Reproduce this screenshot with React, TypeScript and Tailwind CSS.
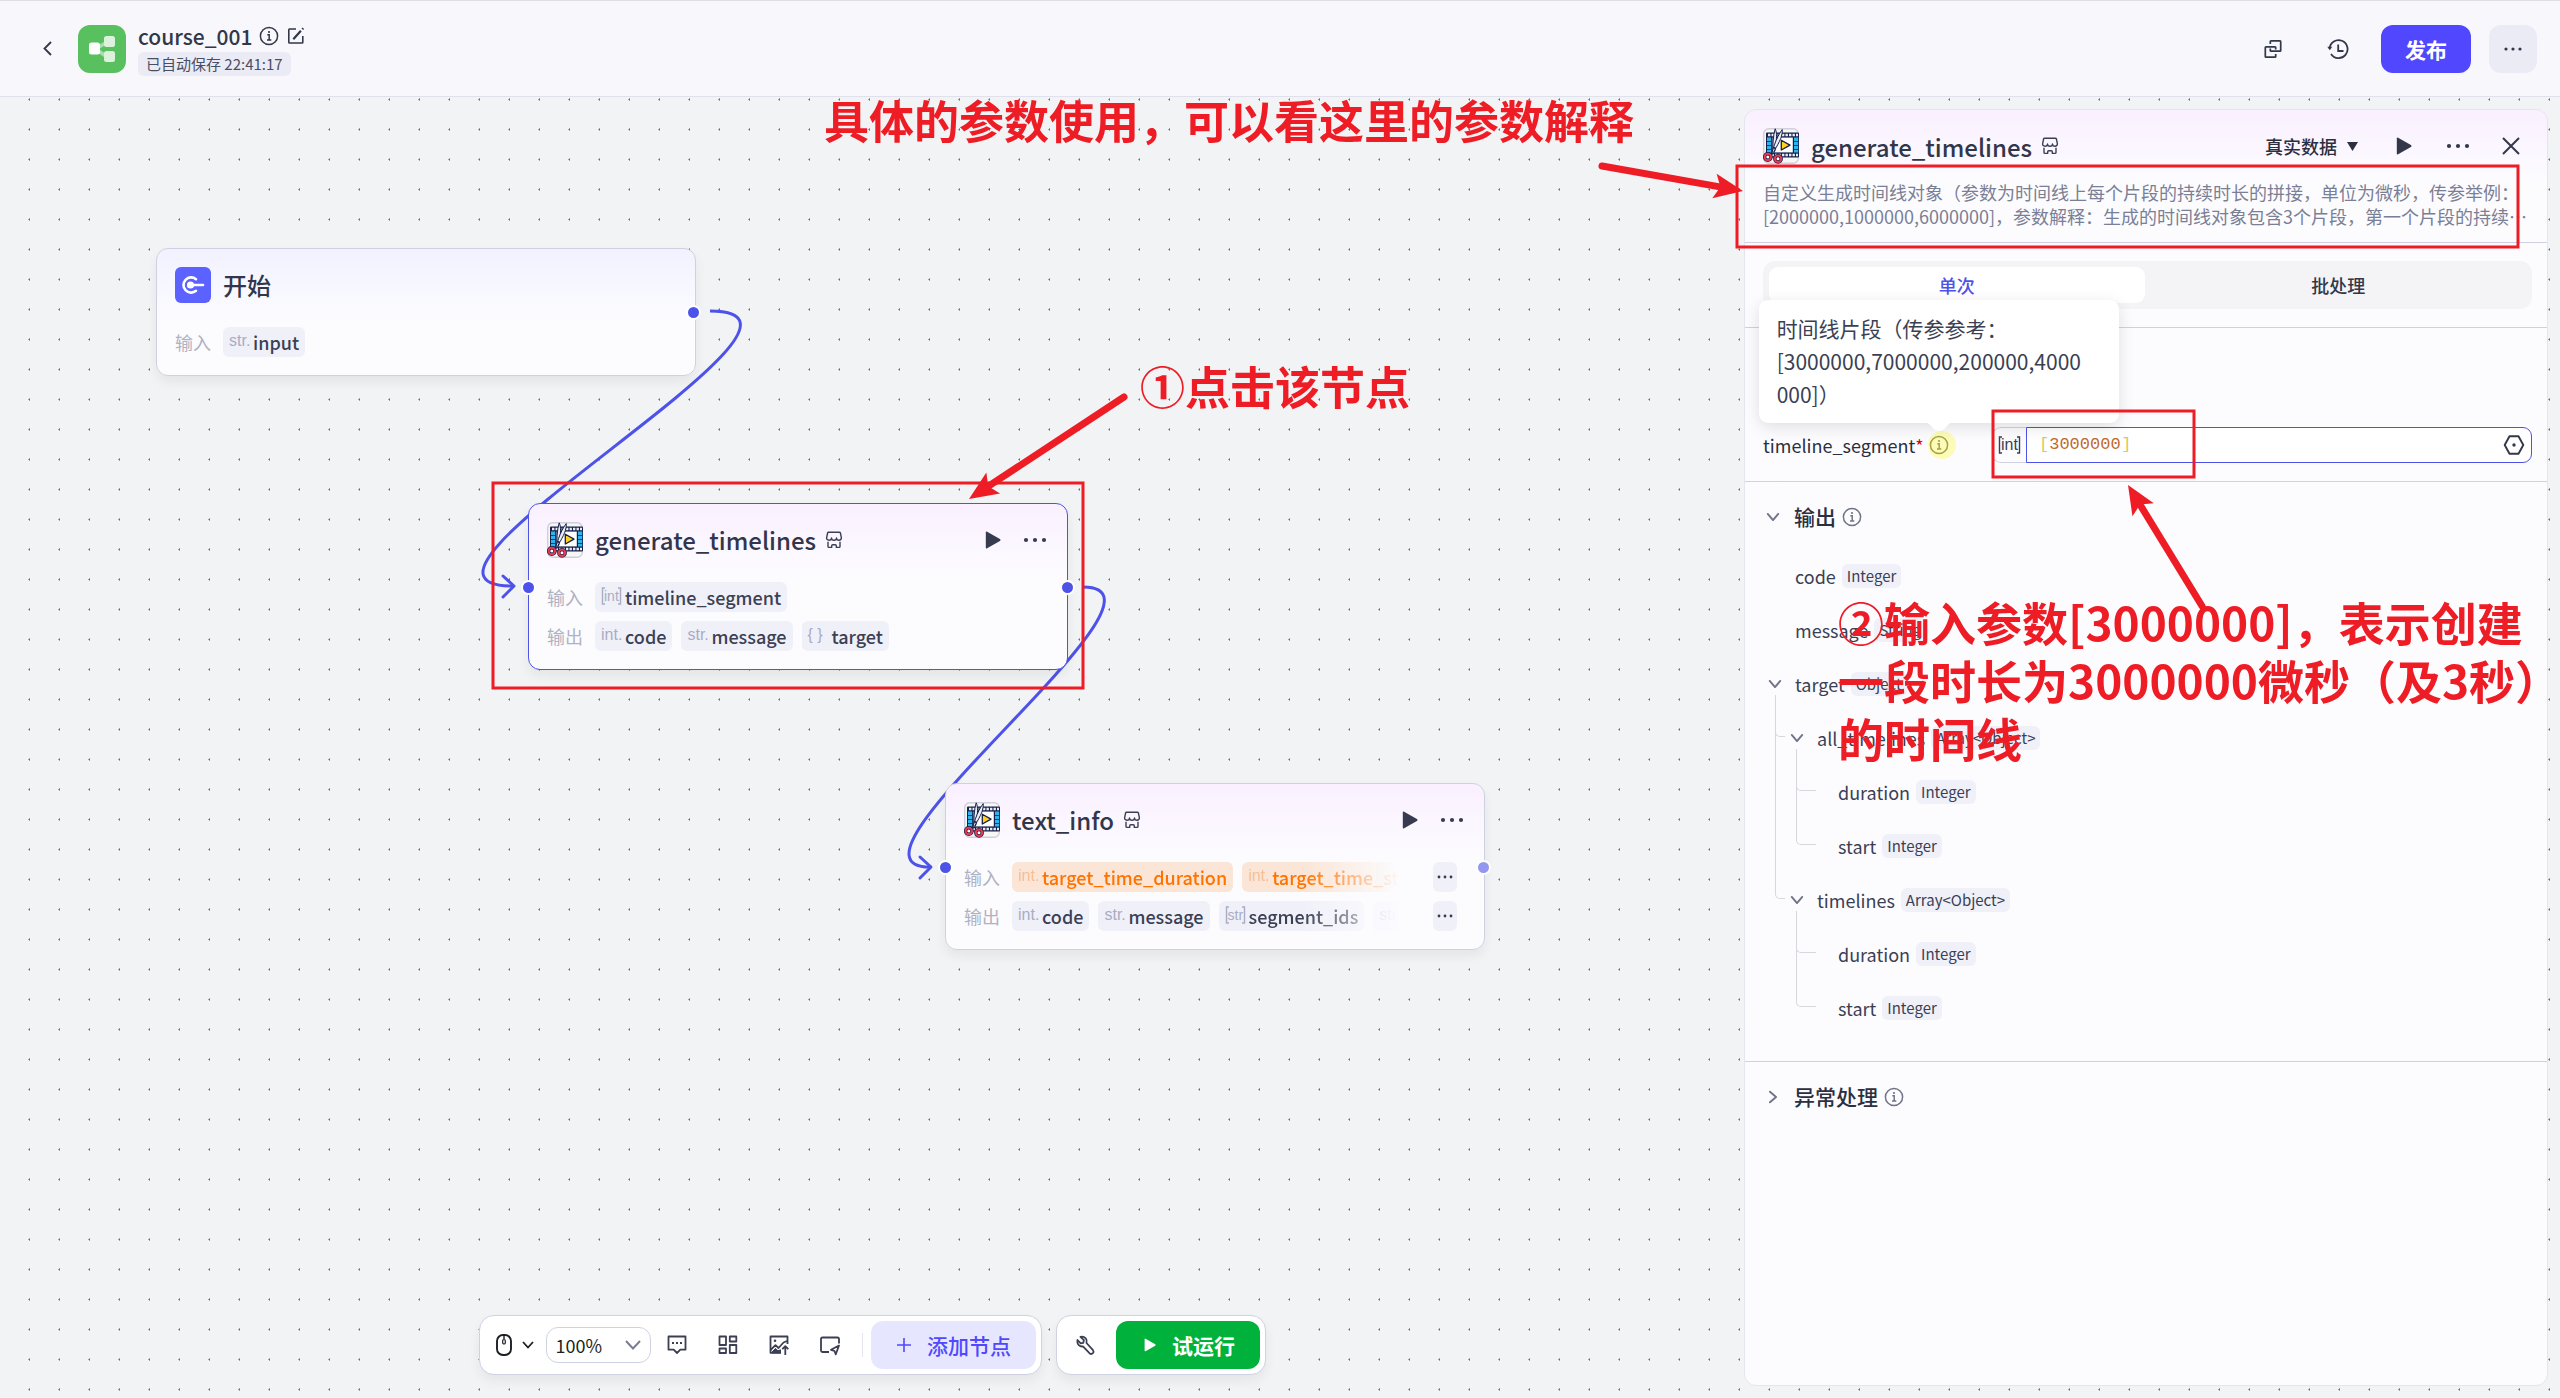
import type { ReactNode } from "react";

const SANS = "font-['Noto_Sans_CJK_SC','Noto_Sans',sans-serif]";

type Kind = "int" | "str" | "obj" | "int[]" | "str[]";

function TypeTag({ kind, large }: { kind: Kind; large?: boolean }) {
  if (kind === "obj") {
    return <span className="font-['Liberation_Sans',sans-serif] text-base leading-5">{"{ }"}</span>;
  }
  if (kind === "int[]" || kind === "str[]") {
    return (
      <span
        className={
          large
            ? "flex h-5 items-center font-['Liberation_Sans',sans-serif] text-base leading-5"
            : "flex h-5 items-center font-['Liberation_Sans',sans-serif] text-sm leading-5"
        }
      >
        <svg width="4" height="18" viewBox="0 0 4 18" fill="none" stroke="currentColor" strokeWidth="1.4">
          <path d="M4 1H1.5v16H4" />
        </svg>
        <span className="-mx-px">{kind === "int[]" ? "int" : "str"}</span>
        <svg width="4" height="18" viewBox="0 0 4 18" fill="none" stroke="currentColor" strokeWidth="1.4">
          <path d="M0 1h2.5v16H0" />
        </svg>
      </span>
    );
  }
  return <span className="font-['Liberation_Sans',sans-serif] text-base leading-5">{kind}.</span>;
}

function Chip({ kind, children, warn }: { kind: Kind; children: ReactNode; warn?: boolean }) {
  return (
    <span
      className={
        warn
          ? "flex h-[30px] shrink-0 items-center rounded-md bg-[#fae5d6] px-1.5 text-lg leading-[30px] font-medium text-[#ff7300]"
          : "flex h-[30px] shrink-0 items-center rounded-md bg-[#f0f0f9] px-1.5 text-lg leading-[30px] font-medium text-[#3b4054]"
      }
    >
      <span className={warn ? "flex w-6 pb-0.5 font-normal text-[#f6bf95]" : "flex w-6 pb-0.5 font-normal text-[#a9acc4]"}>
        <TypeTag kind={kind} />
      </span>
      {children}
    </span>
  );
}

function InfoIcon({ className }: { className?: string }) {
  return (
    <svg className={className} width="20" height="20" viewBox="0 0 20 20" fill="none" stroke="currentColor" strokeWidth="1.5" aria-hidden="true">
      <circle cx="10" cy="10" r="8.6" />
      <circle cx="10" cy="6" r="1.1" fill="currentColor" stroke="none" />
      <path d="M8.3 8.8h1.9v5M8 14h4.3" />
    </svg>
  );
}

function StoreIcon() {
  return (
    <svg className="text-[#3b3f54]" width="18" height="18" viewBox="0 0 18 18" fill="none" stroke="currentColor" strokeWidth="1.4" strokeLinejoin="round" aria-hidden="true">
      <path d="M3.6 1.200h10.8q.8 0 1 .8l1 4.800q0 2.400-2.400 2.400T11.500 7Q11.500 9.200 9 9.200T6.500 7Q6.500 9.200 4 9.200T1.600 6.800l1-4.800q.2-.8 1-.8Z" />
      <path d="M3 10.800v4.600q0 1 1 1h2.700v-1.700q0-1 1-1h2.600q1 0 1 1v1.700H14q1 0 1-1v-4.600" />
    </svg>
  );
}

function PlayIcon({ className }: { className?: string }) {
  return (
    <svg className={className} width="16" height="18" viewBox="0 0 16 18" fill="currentColor" aria-hidden="true">
      <path d="M.8 1.600Q.8.2 2.100.8l12.800 7.300q1.200.9 0 1.800L2.100 17.200Q.8 17.800.8 16.400Z" />
    </svg>
  );
}

function DotsIcon({ small }: { small?: boolean }) {
  return (
    <svg width={small ? 16 : 24} height={small ? 4 : 6} viewBox="0 0 24 6" fill="currentColor" aria-hidden="true">
      <circle cx="3" cy="3" r="2.100" />
      <circle cx="12" cy="3" r="2.100" />
      <circle cx="21" cy="3" r="2.100" />
    </svg>
  );
}

function ChevronDown({ className, size = 16 }: { className?: string; size?: number }) {
  return (
    <svg className={className} width={size} height={size} viewBox="0 0 16 16" fill="none" stroke="currentColor" strokeWidth="2.200" strokeLinecap="round" strokeLinejoin="round" aria-hidden="true">
      <path d="M2 4.500l6 7 6-7" />
    </svg>
  );
}

function CutterIcon() {
  return (
    <svg width="36" height="36" viewBox="0 0 36 36" aria-hidden="true">
      <rect x=".7" y=".7" width="34.600" height="34.600" rx="5" fill="#f7f7f6" stroke="#cfd0dc" strokeWidth="1.400" />
      <rect x="3" y="4.500" width="33" height="25" rx="1" fill="#16204a" />
      <rect x="4" y="9.500" width="4.200" height="15" fill="#2bb4ee" />
      <rect x="31" y="9.500" width="4.200" height="15" fill="#2bb4ee" />
      <path d="M4 13.500h4.500M4 17.500h4.500M4 21.500h4.500M31 13.500h4.500M31 17.500h4.500M31 21.500h4.500" stroke="#16204a" strokeWidth=".8" />
      <path d="M5 7h30M5 27h30" stroke="#e9edf8" strokeWidth="2.400" strokeDasharray="2.400 1.100" />
      <rect x="9.600" y="9.600" width="20.200" height="14.800" fill="#fdfdfd" />
      <path d="M18.300 12.200v9.800l8.700-4.900Z" fill="#ffd21c" stroke="#16204a" strokeWidth="1.300" strokeLinejoin="round" />
      <path d="M12.200.8c1.900 4.200 1.700 9-.2 22l-2.300 3.700c0-8 .3-19 2.500-25.700Z" fill="#eceff6" stroke="#16204a" strokeWidth="1" />
      <path d="M19.200 1.600c.5 6-2 11-8.200 21.800l-2.600 3 3-9.500c2.200-6 4.500-11 7.800-15.300Z" fill="#eceff6" stroke="#16204a" strokeWidth="1" />
      <circle cx="11.800" cy="20" r="1" fill="#16204a" />
      <circle cx="4.800" cy="29" r="3.200" fill="#fff" stroke="#1d1f45" strokeWidth="3.400" />
      <circle cx="4.800" cy="29" r="3.200" fill="none" stroke="#ea3a52" strokeWidth="2" />
      <circle cx="15" cy="30.800" r="3.200" fill="#fff" stroke="#1d1f45" strokeWidth="3.400" />
      <circle cx="15" cy="30.800" r="3.200" fill="none" stroke="#ea3a52" strokeWidth="2" />
    </svg>
  );
}

function Port({ className }: { className: string }) {
  return <span className={`absolute size-[15px] rounded-full border-2 border-white ${className}`} />;
}

function NodeRow({ label, children }: { label: string; children: ReactNode }) {
  return (
    <div className="flex h-[30px] items-center gap-3">
      <span className="w-9 shrink-0 text-lg leading-[30px] text-[#b0b2c3]">{label}</span>
      {children}
    </div>
  );
}

function NodeActions() {
  return (
    <div className="ml-auto flex items-center gap-[22px] text-[#363b4f]">
      <button aria-label="运行" className="flex">
        <PlayIcon />
      </button>
      <button aria-label="更多" className="mr-0.5 flex">
        <DotsIcon />
      </button>
    </div>
  );
}

function Wires() {
  return (
    <svg className="pointer-events-none absolute inset-0 h-full w-full overflow-visible" fill="none" stroke="#4d53e8" strokeWidth="3" aria-hidden="true">
      <path d="M710 214C867 214 357 489 513 489" />
      <path d="M503 479l11 10-11 11" strokeLinecap="round" strokeLinejoin="round" />
      <path d="M1083 490C1196 490 818 770 930 770" />
      <path d="M920 760l11 10-11 11" strokeLinecap="round" strokeLinejoin="round" />
    </svg>
  );
}

const nodeBox =
  "absolute flex w-[540px] flex-col gap-[9px] rounded-xl border p-[18px] shadow-[0_6px_12px_rgba(0,0,0,0.06)]";

function Canvas() {
  return (
    <div className="absolute inset-0">
      <Wires />
      <section className={`${nodeBox} top-[151px] left-[156px] border-[#cfd1e2] bg-linear-to-b from-[#f2f2ff] to-[#fcfcff] to-60%`}>
        <div className="mb-[15px] flex h-9 items-center gap-3">
          <span className="flex size-9 items-center justify-center rounded-md bg-[#5c62ff]">
            <svg width="24" height="20" viewBox="0 0 24 20" fill="none" stroke="#fff" strokeWidth="2.600" strokeLinecap="round" aria-hidden="true">
              <path d="M15 4.200A7.600 7.600 0 1 0 15 15.800" />
              <circle cx="9.500" cy="10" r="3.600" fill="#fff" stroke="none" />
              <path d="M11 10h11" />
            </svg>
          </span>
          <h2 className="text-2xl leading-9 font-medium text-[#32364a]">开始</h2>
        </div>
        <NodeRow label="输入">
          <Chip kind="str">input</Chip>
        </NodeRow>
        <Port className="top-[56px] -right-[6px] bg-[#4d53e8]" />
      </section>

      <section className={`${nodeBox} top-[406px] left-[528px] border-[#4d53e8] bg-linear-to-b from-[#faf0ff] to-[#fcfcff] to-45%`}>
        <div className="mb-[15px] flex h-9 items-center">
          <CutterIcon />
          <h2 className="mr-[9px] ml-3 text-2xl leading-9 font-medium text-[#32364a]">generate_timelines</h2>
          <StoreIcon />
          <NodeActions />
        </div>
        <NodeRow label="输入">
          <Chip kind="int[]">timeline_segment</Chip>
        </NodeRow>
        <NodeRow label="输出">
          <div className="flex gap-[9px]">
            <Chip kind="int">code</Chip>
            <Chip kind="str">message</Chip>
            <Chip kind="obj">target</Chip>
          </div>
        </NodeRow>
        <Port className="top-[76px] -left-[8px] bg-[#4d53e8]" />
        <Port className="top-[76px] -right-[8px] bg-[#4d53e8]" />
      </section>

      <section className={`${nodeBox} top-[686px] left-[945px] border-[#cfd1e2] bg-linear-to-b from-[#faf0ff] to-[#fcfcff] to-45%`}>
        <div className="mb-[15px] flex h-9 items-center">
          <CutterIcon />
          <h2 className="mr-[9px] ml-3 text-2xl leading-9 font-medium text-[#32364a]">text_info</h2>
          <StoreIcon />
          <NodeActions />
        </div>
        <NodeRow label="输入">
          <div className="flex w-[388px] gap-[9px] overflow-hidden mask-r-from-75%">
            <Chip kind="int" warn>target_time_duration</Chip>
            <Chip kind="int" warn>target_time_start</Chip>
          </div>
          <MoreChip />
        </NodeRow>
        <NodeRow label="输出">
          <div className="flex w-[388px] gap-[9px] overflow-hidden mask-r-from-75%">
            <Chip kind="int">code</Chip>
            <Chip kind="str">message</Chip>
            <Chip kind="str[]">segment_ids</Chip>
            <Chip kind="str">
              <span className="w-6" />
            </Chip>
          </div>
          <MoreChip />
        </NodeRow>
        <Port className="top-[76px] -left-[8px] bg-[#4d53e8]" />
        <Port className="top-[76px] -right-[7px] bg-[#9297f2]" />
      </section>
    </div>
  );
}

function MoreChip() {
  return (
    <button aria-label="查看全部" className="mr-[9px] ml-auto flex h-[30px] w-6 shrink-0 items-center justify-center rounded-md bg-[#f0f0f9] text-[#363b4f]">
      <DotsIcon small />
    </button>
  );
}

function Header() {
  return (
    <header className="flex h-[97px] shrink-0 items-center border-t border-b border-t-[#dfdfe2] border-b-[#e0e1ec] bg-[#f7f7fc] pr-[23px] pl-[35px]">
      <button aria-label="返回" className="flex size-6 items-center justify-center text-[#32374a]">
        <svg width="9" height="15" viewBox="0 0 9 15" fill="none" stroke="currentColor" strokeWidth="1.800" aria-hidden="true">
          <path d="M8 1L1.500 7.500 8 14" />
        </svg>
      </button>
      <span className="ml-[19px] flex size-12 items-center justify-center rounded-xl bg-[#59c060]">
        <svg width="26" height="26" viewBox="0 0 26 26" aria-hidden="true">
          <path d="M7 13l11-7M7 13l11 8" stroke="#a9dfac" strokeWidth="3.500" />
          <rect x="15" y="0" width="11" height="11" rx="2.500" fill="#dcf2dd" />
          <rect x="15" y="15" width="11" height="11" rx="2.500" fill="#dcf2dd" />
          <rect x="0" y="6.500" width="11" height="12" rx="2.500" fill="#fff" />
        </svg>
      </span>
      <div className="ml-3 flex flex-col items-start">
        <div className="flex h-7 items-center gap-2 text-[#32374a]">
          <h1 className="text-[21px] leading-7 font-medium">course_001</h1>
          <InfoIcon className="-ml-px" />
          <button aria-label="编辑" className="flex">
            <svg width="18" height="18" viewBox="0 0 18 18" fill="none" stroke="currentColor" strokeWidth="1.600" strokeLinejoin="round" aria-hidden="true">
              <path d="M9 2H2.500q-.7 0-.7.7v12.600q0 .7.700.7h12.600q.7 0 .7-.7V9" />
              <path d="M6.300 12.200l7.600-8.400M15.300 2.300l1-1.100" strokeWidth="2.200" />
            </svg>
          </button>
        </div>
        <span className="mt-0.5 h-6 rounded-md bg-[#ebebf5] px-2 text-[15px] leading-6 text-[#4a4e63]">已自动保存 22:41:17</span>
      </div>
      <div className="ml-auto flex items-center text-[#32374a]">
        <button aria-label="复制" className="flex">
          <svg width="20" height="20" viewBox="0 0 20 20" fill="none" stroke="currentColor" strokeWidth="1.700" strokeLinejoin="round" aria-hidden="true">
            <path d="M7.300 5V2.500q0-.7.7-.7h9q.7 0 .7.700v9q0 .7-.7.7H8q-.7 0-.7-.7V9.600" />
            <path d="M12.700 15v2.500q0 .7-.7.700H3q-.7 0-.7-.7v-9q0-.7.700-.7h9q.7 0 .7.700v2" />
          </svg>
        </button>
        <button aria-label="历史版本" className="ml-[44px] flex">
          <svg width="22" height="22" viewBox="0 0 22 22" fill="none" stroke="currentColor" strokeWidth="1.800" aria-hidden="true">
            <path d="M2.600 10.500A9 9 0 1 1 4 16" />
            <path d="M.3 8.700h5l-2.500 3.600Z" fill="currentColor" stroke="none" />
            <path d="M11.200 6.500V13h5.300" />
          </svg>
        </button>
        <button className="ml-8 h-12 w-[90px] rounded-xl bg-[#5147ff] text-[21px] leading-6 font-bold text-white">发布</button>
        <button aria-label="更多" className="ml-[18px] flex size-12 items-center justify-center rounded-xl bg-[#ebebf5]">
          <svg width="18" height="4" viewBox="0 0 18 4" fill="currentColor" aria-hidden="true">
            <circle cx="2" cy="2" r="1.600" />
            <circle cx="9" cy="2" r="1.600" />
            <circle cx="16" cy="2" r="1.600" />
          </svg>
        </button>
      </div>
    </header>
  );
}

function IconButton({ label, children }: { label: string; children: ReactNode }) {
  return (
    <button aria-label={label} className="flex size-6 items-center justify-center">
      <svg width="22" height="22" viewBox="0 0 22 22" fill="none" stroke="currentColor" strokeWidth="1.800" strokeLinejoin="round" aria-hidden="true">
        {children}
      </svg>
    </button>
  );
}

function Toolbar() {
  return (
    <div className="relative mb-[11px] flex gap-[14px]">
      <div className="flex h-[60px] items-center rounded-[15px] border border-[#d0d2e2] bg-white pr-[5px] pl-4 text-[#3b3f54] shadow-[0_6px_12px_rgba(0,0,0,0.06)]">
        <button aria-label="鼠标模式" className="flex items-center gap-2.5 text-[#1c1f23]">
          <svg width="16" height="22" viewBox="0 0 16 22" fill="none" stroke="currentColor" strokeWidth="1.900" aria-hidden="true">
            <rect x="1" y="1" width="14" height="20" rx="6" />
            <rect x="6.700" y="5.500" width="2.600" height="4.500" rx="1.300" strokeWidth="1.200" />
            <path d="M8 1v4" strokeWidth="1.400" />
          </svg>
          <svg width="12" height="8" viewBox="0 0 12 8" fill="none" stroke="currentColor" strokeWidth="1.800" aria-hidden="true">
            <path d="M1 1l5 5.500L11 1" />
          </svg>
        </button>
        <div className="relative ml-3 flex items-center">
          <select aria-label="缩放" defaultValue="100" className="h-9 w-[105px] appearance-none rounded-xl border border-[#d0d2e2] bg-white pl-[9px] text-lg leading-8 text-[#1c1f23]">
            <option value="100">100%</option>
            <option value="50">50%</option>
          </select>
          <svg className="pointer-events-none absolute right-2.5" width="16" height="10" viewBox="0 0 16 10" fill="none" stroke="#777b94" strokeWidth="1.900" aria-hidden="true">
            <path d="M1 1l7 7.500L15 1" />
          </svg>
        </div>
        <div className="ml-[14px] flex gap-[27px]">
          <IconButton label="评论">
            <path d="M2.500 2.500h17v13.200h-5.200L11 19l-3.300-3.300H2.500Z" />
            <path d="M6 9h2M10 9h2M14 9h2" strokeWidth="2" />
          </IconButton>
          <IconButton label="布局">
            <rect x="2.500" y="2.500" width="6.500" height="8.500" />
            <rect x="12.800" y="2.500" width="6.500" height="5" />
            <rect x="2.500" y="14.500" width="6.500" height="4.500" />
            <rect x="12.800" y="11" width="6.500" height="8" />
          </IconButton>
          <IconButton label="导出图片">
            <path d="M19.500 10V2.500h-17v16.300H13M17.300 21v-8.500M14.300 15.200l3-3 3 3" />
            <path d="M2.500 16l5-4.800 3 2.800 5-5.500 3.500-1.500" />
            <path d="M4 18l3.500-3.500 2.500 2.300 2.500-1v3H4Z" fill="currentColor" strokeWidth="1" />
            <circle cx="7" cy="6.800" r="1.300" fill="currentColor" stroke="none" />
          </IconButton>
          <IconButton label="小地图">
            <path d="M20 9.500V5q0-1.500-1.500-1.500h-15Q2 3.500 2 5v11.500Q2 18 3.500 18H10" />
            <path d="M20 11.500l-8 4.300 3.500 1.200 1.300 3.300Z" />
          </IconButton>
        </div>
        <span className="mr-2 ml-5 h-6 w-px bg-[#e4e5ee]" />
        <button className="flex h-12 w-[165px] items-center justify-center gap-4 rounded-xl bg-[#e6e7ff] pl-0.5 text-[21px] leading-6 font-medium text-[#5147ff]">
          <svg width="14" height="14" viewBox="0 0 14 14" stroke="currentColor" strokeWidth="1.600" aria-hidden="true">
            <path d="M7 0v14M0 7h14" />
          </svg>
          添加节点
        </button>
      </div>
      <div className="flex h-[60px] items-center rounded-[15px] border border-[#d0d2e2] bg-white pr-[5px] pl-[17px] text-[#3b3f54] shadow-[0_6px_12px_rgba(0,0,0,0.06)]">
        <IconButton label="调试">
          <path d="M5.500 2.800l3.400 3.400-.6 2.600-2.600.6L2.500 6q-.6 3.400 1.300 5.200 1.800 1.700 4.200 1.200l6.700 7q1.700 1.200 3.200-.2 1.300-1.500.1-3L11.500 9q.8-2.600-.8-4.700-2-2.200-5.200-1.500Z" />
        </IconButton>
        <button className="ml-[18px] flex h-12 w-36 items-center justify-center gap-4 rounded-xl bg-[#00b23c] pl-1 text-[21px] leading-6 font-bold text-white">
          <PlayIcon className="h-[14px] w-3" />
          试运行
        </button>
      </div>
    </div>
  );
}

type Field = { name: string; type: string; children?: Field[] };

const outputs: Field[] = [
  { name: "code", type: "Integer" },
  { name: "message", type: "String" },
  {
    name: "target",
    type: "Object",
    children: [
      {
        name: "all_timelines",
        type: "Array<Object>",
        children: [
          { name: "duration", type: "Integer" },
          { name: "start", type: "Integer" },
        ],
      },
      {
        name: "timelines",
        type: "Array<Object>",
        children: [
          { name: "duration", type: "Integer" },
          { name: "start", type: "Integer" },
        ],
      },
    ],
  },
];

function FieldTree({ fields, depth = 0 }: { fields: Field[]; depth?: number }) {
  return (
    <ul className={depth === 0 ? "" : depth === 1 ? "ml-3" : "ml-[21px]"}>
      {fields.map((field, i) => (
        <li key={field.name} className="relative">
          {depth > 0 && (
            <span
              className={
                depth === 1
                  ? "absolute -top-4 left-0 h-[42px] w-2.5 rounded-bl-[5px] border-b border-l border-[#d7d8df]"
                  : "absolute -top-4 left-0 h-[42px] w-5 rounded-bl-[5px] border-b border-l border-[#d7d8df]"
              }
            />
          )}
          {depth > 0 && i < fields.length - 1 && <span className="absolute inset-y-0 left-0 w-px bg-[#d7d8df]" />}
          <div className={depth === 0 ? "flex h-[54px] items-center pl-[5px]" : "flex h-[54px] items-center pl-[15px]"}>
            <span className="mr-[13px] flex w-[14px] justify-center text-[#70748a]">
              {field.children && <ChevronDown size={14} />}
            </span>
            <span className="text-lg leading-6 text-[#3b3f54]">{field.name}</span>
            <span className="ml-1.5 h-6 rounded-md bg-[#f0f0f9] px-[5px] text-[15px] leading-6 text-[#3b3f54]">{field.type}</span>
          </div>
          {field.children && <FieldTree fields={field.children} depth={depth + 1} />}
        </li>
      ))}
    </ul>
  );
}

function Panel() {
  return (
    <aside className="relative flex w-[804px] shrink-0 flex-col rounded-xl border border-[#e4e6ef] bg-[#fcfcff] bg-linear-to-b from-[#faf0ff] to-[#fcfcff] to-[72px] text-[#2b2f3f]">
      <div className="border-b border-[#cfd1e2] pt-[18px] pr-[15px] pb-[14px] pl-[18px]">
        <div className="flex h-9 items-center">
          <CutterIcon />
          <h2 className="mr-[9px] ml-3 pt-0.5 text-2xl leading-9 font-medium text-[#32364a]">generate_timelines</h2>
          <StoreIcon />
          <button className="ml-auto flex items-center gap-2.5 text-lg leading-6 font-medium">
            真实数据
            <svg width="11" height="9" viewBox="0 0 11 9" fill="currentColor" aria-hidden="true">
              <path d="M0 0h11L5.500 9Z" />
            </svg>
          </button>
          <div className="ml-[38px] flex items-center text-[#32374a]">
            <button aria-label="运行" className="flex">
              <PlayIcon />
            </button>
            <button aria-label="更多" className="ml-[34px] flex">
              <DotsIcon />
            </button>
            <button aria-label="关闭" className="mr-3 ml-8 flex">
              <svg width="18" height="18" viewBox="0 0 18 18" stroke="currentColor" strokeWidth="2" aria-hidden="true">
                <path d="M1 1l16 16M17 1L1 17" />
              </svg>
            </button>
          </div>
        </div>
        <p className="mt-4 h-12 text-lg leading-6 whitespace-nowrap text-[#7b7f95]" lang="zh-CN">
          自定义生成时间线对象（参数为时间线上每个片段的持续时长的拼接，单位为微秒，传参举例：
          <br />
          [2000000,1000000,6000000]，参数解释：生成的时间线对象包含3个片段，第一个片段的持续…
        </p>
      </div>

      <div className="border-b border-[#cfd1e2] py-[18px] pr-[15px] pl-[18px]">
        <div role="tablist" className="flex h-12 gap-1.5 rounded-xl bg-[#f4f4f7] p-1.5 text-lg leading-6 font-medium">
          <button role="tab" aria-selected="true" className="flex-1 rounded-[9px] bg-white text-[#4d53e8]">单次</button>
          <button role="tab" aria-selected="false" className="flex-1 rounded-[9px] text-[#32374a]">批处理</button>
        </div>
      </div>

      <div className="flex items-center border-b border-[#cfd1e2] pt-[99px] pr-[15px] pb-[18px] pl-[18px]">
        <label htmlFor="timeline" className="text-lg leading-6">timeline_segment</label>
        <span className="text-lg leading-6 text-red-600">*</span>
        <span className="relative ml-[5px] flex text-[#a3a346]">
          <span className="absolute -top-1 -left-px size-7 rounded-full bg-[#fdfbb8]" />
          <InfoIcon className="relative" />
          <span role="tooltip" className="absolute bottom-8 -left-[170px] z-10 w-[360px] rounded-[9px] bg-white px-[18px] py-3 text-[21px] leading-[33px] whitespace-nowrap text-[#3b3f54] shadow-[0_4px_16px_rgba(0,0,0,0.12)]">
            时间线片段（传参参考：
            <br />
            [3000000,7000000,200000,4000
            <br />
            000]）
            <svg className="absolute -bottom-[9px] left-[165px]" width="30" height="10" viewBox="0 0 30 10" fill="#fff" aria-hidden="true">
              <path d="M0 0h30c-7 0-8 9-15 9S7 0 0 0Z" />
            </svg>
          </span>
        </span>
        <div className="ml-auto flex h-9 w-[540px]">
          <span className="flex w-[34px] items-center justify-center rounded-l-[9px] border border-r-0 border-[#cfd1e2] text-[#3b3f54]">
            <TypeTag kind="int[]" large />
          </span>
          <div className="flex flex-1 items-center rounded-r-[9px] border border-[#4d53e8] bg-white pr-1.5 pl-3 font-['Liberation_Mono',monospace] text-[17px] leading-6 text-[#dcc860]">
            [
            <input id="timeline" defaultValue="3000000" className="w-[72px] text-[#c26a2c] outline-none" />
            ]
            <svg className="ml-auto text-[#32374a]" width="22" height="22" viewBox="0 0 22 22" fill="none" stroke="currentColor" strokeWidth="1.900" strokeLinejoin="round" aria-hidden="true">
              <path d="M6.500 2.300h9L20.300 11l-4.800 8.700h-9L1.700 11Z" />
              <circle cx="11" cy="11" r="1.700" fill="currentColor" stroke="none" />
            </svg>
          </div>
        </div>
      </div>

      <div className="border-b border-[#cfd1e2] px-[18px] pt-[18px] pb-[26px]">
        <h3 className="mb-4 flex h-[33px] items-center text-[21px] leading-[33px] font-medium">
          <ChevronDown size={14} className="mr-[14px] ml-[3px] text-[#70748a]" />
          输出
          <InfoIcon className="ml-1.5 text-[#70748a]" />
        </h3>
        <FieldTree fields={outputs} />
      </div>

      <h3 className="flex items-center px-[18px] pt-[18px] text-[21px] leading-[33px] font-medium">
        <ChevronDown size={14} className="mr-[14px] ml-[3px] -rotate-90 text-[#70748a]" />
        异常处理
        <InfoIcon className="ml-1.5 text-[#70748a]" />
      </h3>
    </aside>
  );
}

function Arrow({ tip, tail }: { tip: [number, number]; tail: [number, number] }) {
  const dx = tail[0] - tip[0];
  const dy = tail[1] - tip[1];
  const angle = (Math.atan2(dy, dx) * 180) / Math.PI;
  return (
    <g transform={`translate(${tip[0]} ${tip[1]}) rotate(${angle})`}>
      <path d="M0 0L29-12.500 23 0l6 12.500Z" fill="#ee1c25" stroke="none" />
      <path d={`M22 0H${Math.hypot(dx, dy)}`} strokeWidth="7" strokeLinecap="round" />
    </g>
  );
}

function Annotations() {
  return (
    <div className="pointer-events-none absolute inset-0 z-20 text-[45px] leading-[58px] font-bold text-[#ee1c25]">
      <svg className="absolute inset-0 h-full w-full" fill="none" stroke="#ee1c25" strokeWidth="3" aria-hidden="true">
        <rect x="493" y="483" width="590" height="205" />
        <rect x="1737" y="166" width="781" height="81" />
        <rect x="1993" y="411" width="201" height="66" />
        <Arrow tip={[1743, 191]} tail={[1602, 166]} />
        <Arrow tip={[969, 499]} tail={[1124, 397]} />
        <Arrow tip={[2128, 485]} tail={[2202, 606]} />
      </svg>
      <p className="absolute top-[91px] left-[824px] whitespace-nowrap">具体的参数使用，可以看这里的参数解释</p>
      <p className="absolute top-[357px] left-[1140px] whitespace-nowrap">①点击该节点</p>
      <p className="absolute top-[592px] left-[1838px] text-[46px] whitespace-nowrap">
        ②输入参数[3000000]，表示创建
        <br />
        一段时长为3000000微秒（及3秒）
        <br />
        的时间线
      </p>
    </div>
  );
}

export default function App() {
  return (
    <div className={`relative flex min-h-screen flex-col overflow-hidden bg-[#f2f3f5] ${SANS}`}>
      <Header />
      <main className="relative flex flex-1 bg-[radial-gradient(circle_at_29.5px_2.5px,#6d6f78_0.8px,transparent_1.3px)] bg-[length:30px_30px] py-3 pr-3">
        <Canvas />
        <div className="flex flex-1 items-end justify-center">
          <Toolbar />
        </div>
        <Panel />
      </main>
      <Annotations />
    </div>
  );
}
